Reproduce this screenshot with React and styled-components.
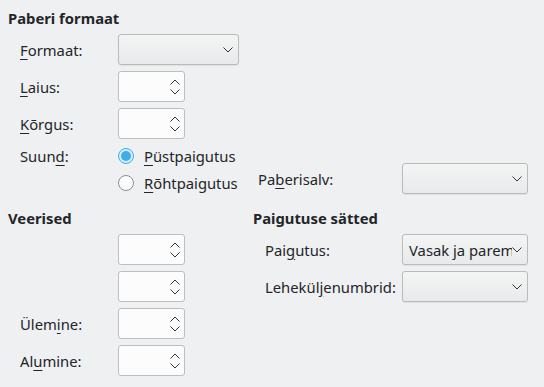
import React from 'react';
import styled, { createGlobalStyle } from 'styled-components';

const GlobalStyle = createGlobalStyle`
  body {
    margin: 0;
    background: #eff0f1;
    font-family: "Noto Sans", "DejaVu Sans", sans-serif;
    font-size: 14.8px;
    color: #232629;
  }
`;

const Page = styled.div`
  display: grid;
  grid-template-columns: 245px 275px;
  grid-template-rows: auto auto;
  row-gap: 14px;
  padding: 8px;
`;

const Section = styled.div`
  display: flex;
  flex-direction: column;
`;

const BottomRight = styled(Section)`
  justify-content: flex-end;
`;

const Heading = styled.div`
  font-weight: bold;
  line-height: 20px;
  margin-bottom: 6px;
`;

const FieldGrid = styled.div`
  display: grid;
  grid-template-columns: ${({ labelWidth }) => labelWidth}px auto;
  row-gap: 6px;
  padding-left: ${({ indent }) => indent}px;
  align-items: center;
`;

const Label = styled.div`
  white-space: nowrap;
  line-height: ${({ tall }) => (tall ? '22px' : '20px')};
  align-self: ${({ top }) => (top ? 'start' : 'center')};

  u {
    text-decoration: underline;
    text-underline-offset: 3px;
  }
`;

const Combo = styled.div`
  box-sizing: border-box;
  width: ${({ width }) => width}px;
  height: 31px;
  display: flex;
  align-items: center;
  padding: 0 5px 0 6px;
  border: 1px solid #b8babc;
  border-radius: 3px;
  background: linear-gradient(#f3f4f4, #e9eaeb);
  box-shadow: 0 1px 1px rgba(0, 0, 0, 0.07);
`;

const ComboText = styled.span`
  flex: 1;
  overflow: hidden;
  white-space: nowrap;
`;

const Spin = styled.div`
  box-sizing: border-box;
  width: 67px;
  height: 31px;
  display: flex;
  justify-content: flex-end;
  align-items: center;
  padding-right: 4px;
  border: 1px solid #bcbebf;
  border-radius: 3px;
  background: #fcfcfc;
`;

const Arrows = styled.div`
  display: flex;
  flex-direction: column;
  gap: 4px;
`;

const RadioList = styled.div`
  display: flex;
  flex-direction: column;
  gap: 5px;
`;

const RadioRow = styled.div`
  display: flex;
  align-items: center;
  gap: 10px;
  height: 22px;
  white-space: nowrap;

  u {
    text-underline-offset: 3px;
  }
`;

const Chevron = ({ up }) => (
  <svg width="10" height="6" viewBox="0 0 10 6">
    <path
      d={up ? 'M0.5 5.5 L5 1 L9.5 5.5' : 'M0.5 0.5 L5 5 L9.5 0.5'}
      fill="none"
      stroke="#31363b"
      strokeWidth="1"
    />
  </svg>
);

const ComboBox = ({ width, text }) => (
  <Combo width={width}>
    <ComboText>{text}</ComboText>
    <svg width="10" height="6" viewBox="0 0 10 6">
      <path d="M0.5 0.5 L5 5 L9.5 0.5" fill="none" stroke="#31363b" strokeWidth="1" />
    </svg>
  </Combo>
);

const SpinBox = () => (
  <Spin>
    <Arrows>
      <Chevron up />
      <Chevron />
    </Arrows>
  </Spin>
);

const Radio = ({ checked }) =>
  checked ? (
    <svg width="16" height="16" viewBox="0 0 16 16">
      <circle cx="8" cy="8" r="7.5" fill="#d6ecf8" stroke="#3daee9" />
      <circle cx="8" cy="8" r="5" fill="#3daee9" />
    </svg>
  ) : (
    <svg width="16" height="16" viewBox="0 0 16 16">
      <circle cx="8" cy="8" r="7.5" fill="#fcfcfc" stroke="#8c8e90" />
    </svg>
  );

const Paberisalv = styled.div`
  display: grid;
  grid-template-columns: 144px auto;
  align-items: center;
  padding-left: 5px;
`;

export default function App() {
  return (
    <>
      <GlobalStyle />
      <Page>
        <Section>
          <Heading>Paberi formaat</Heading>
          <FieldGrid labelWidth={98} indent={12}>
            <Label><u>F</u>ormaat:</Label>
            <ComboBox width={121} />
            <Label><u>L</u>aius:</Label>
            <SpinBox />
            <Label><u>K</u>õrgus:</Label>
            <SpinBox />
            <Label top tall>Suun<u>d</u>:</Label>
            <RadioList>
              <RadioRow>
                <Radio checked />
                <span><u>P</u>üstpaigutus</span>
              </RadioRow>
              <RadioRow>
                <Radio />
                <span><u>R</u>õhtpaigutus</span>
              </RadioRow>
            </RadioList>
          </FieldGrid>
        </Section>
        <BottomRight>
          <Paberisalv>
            <Label>Pa<u>b</u>erisalv:</Label>
            <ComboBox width={126} />
          </Paberisalv>
        </BottomRight>
        <Section>
          <Heading>Veerised</Heading>
          <FieldGrid labelWidth={98} indent={12}>
            <Label />
            <SpinBox />
            <Label />
            <SpinBox />
            <Label>Ülem<u>i</u>ne:</Label>
            <SpinBox />
            <Label>Al<u>u</u>mine:</Label>
            <SpinBox />
          </FieldGrid>
        </Section>
        <Section>
          <Heading>Paigutuse sätted</Heading>
          <FieldGrid labelWidth={137} indent={12}>
            <Label>Pai<u>g</u>utus:</Label>
            <ComboBox width={126} text="Vasak ja parem" />
            <Label>Lehekül<u>j</u>enumbrid:</Label>
            <ComboBox width={126} />
          </FieldGrid>
        </Section>
      </Page>
    </>
  );
}
